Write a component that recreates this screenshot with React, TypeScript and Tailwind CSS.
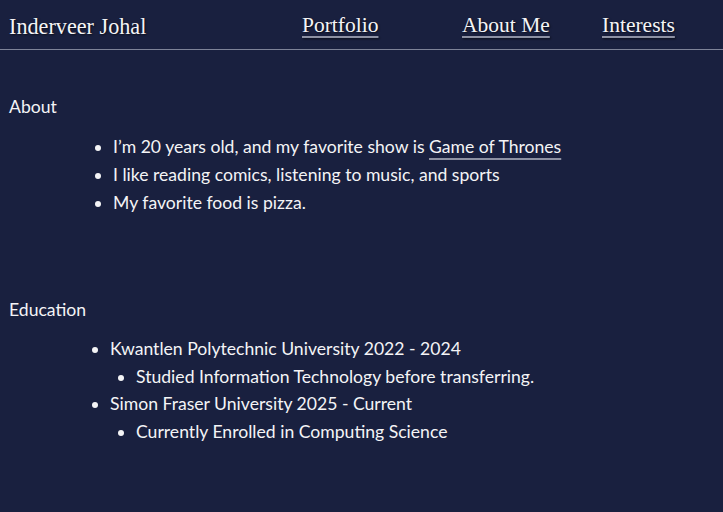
export default function App() {
  const about = [
    "I like reading comics, listening to music, and sports",
    "My favorite food is pizza.",
  ];

  const education = [
    {
      school: "Kwantlen Polytechnic University 2022 - 2024",
      note: "Studied Information Technology before transferring.",
    },
    {
      school: "Simon Fraser University 2025 - Current",
      note: "Currently Enrolled in Computing Science",
    },
  ];

  return (
    <div className="min-h-[512px] w-full bg-[#19203f] text-[#f4f4f6] font-['Lato',sans-serif]">
      {/* Header */}
      <header className="flex h-[50px] items-center border-b border-[#7e8398] pl-[9px] pt-[5px] font-['Liberation_Serif',serif] [text-shadow:1px_1px_2px_rgba(0,0,0,0.6)]">
        <div className="w-[293px] pb-[1px] text-[22.2px]">Inderveer Johal</div>
        <nav className="flex pb-[3px] text-[21.5px]">
          <div className="w-[160px]">
            <a href="#" className="underline decoration-[#8d91a3] underline-offset-[4px]">
              Portfolio
            </a>
          </div>
          <div className="w-[140px]">
            <a href="#" className="underline decoration-[#8d91a3] underline-offset-[4px]">
              About Me
            </a>
          </div>
          <div>
            <a href="#" className="underline decoration-[#8d91a3] underline-offset-[4px]">
              Interests
            </a>
          </div>
        </nav>
      </header>

      <main className="px-[9px] pt-[43px] text-[17.6px] leading-[28px]">
        {/* About */}
        <h2>About</h2>
        <ul className="mt-[12px] list-disc pl-[104px]">
          <li>
            I’m 20 years old, and my favorite show is{" "}
            <a href="#" className="underline decoration-[#8d91a3] decoration-2 underline-offset-[5px]">
              Game of Thrones
            </a>
          </li>
          {about.map((item) => (
            <li key={item}>{item}</li>
          ))}
        </ul>

        {/* Education */}
        <h2 className="mt-[79px]">Education</h2>
        <ul className="mt-[11px] list-disc pl-[101px] leading-[27.7px]">
          {education.map((e) => (
            <li key={e.school}>
              {e.school}
              <ul className="list-disc pl-[26px]">
                <li>{e.note}</li>
              </ul>
            </li>
          ))}
        </ul>
      </main>
    </div>
  );
}
